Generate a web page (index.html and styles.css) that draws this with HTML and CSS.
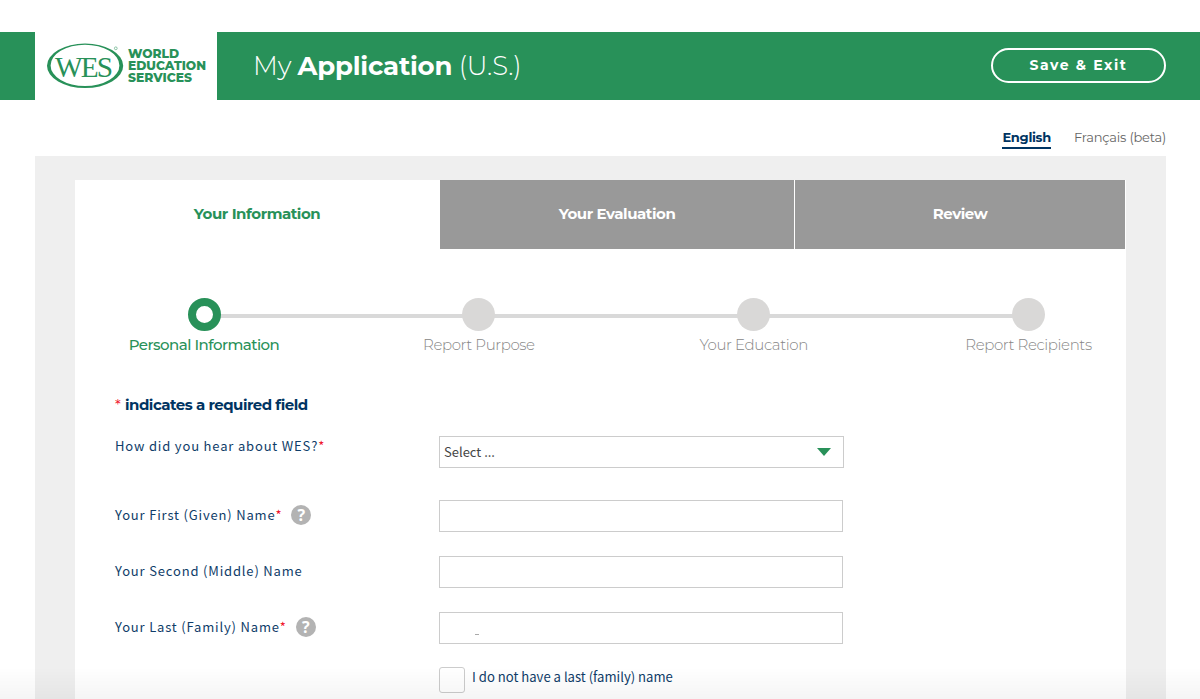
FILE: index.html
```html
<!DOCTYPE html>
<html lang="en">
<head>
  <meta charset="UTF-8">
  <title>My Application (U.S.)</title>
  <meta name="viewport" content="width=device-width, initial-scale=1.0">
  <link rel="stylesheet" href="styles.css">
</head>
<body>
  <header class="site-header">
    <a class="logo" href="#">
      <svg width="182" height="69" viewBox="35 31 182 69">
        <path class="logo-green" fill-rule="evenodd" d="M47 65.8a38.1 22.3 0 1 0 76.2 0a38.1 22.3 0 1 0 -76.2 0zM50.6 65.4a34.4 20.7 0 1 0 68.8 0a34.4 20.7 0 1 0 -68.8 0z"/>
        <text class="logo-mark" x="55" y="76.5" textLength="56" lengthAdjust="spacingAndGlyphs">WES</text>
        <circle class="logo-ring" cx="115.8" cy="48.3" r="1.4"/>
        <text class="logo-name" x="128" y="58" textLength="51" lengthAdjust="spacingAndGlyphs">WORLD</text>
        <text class="logo-name" x="128" y="70" textLength="78" lengthAdjust="spacingAndGlyphs">EDUCATION</text>
        <text class="logo-name" x="128" y="82" textLength="64" lengthAdjust="spacingAndGlyphs">SERVICES</text>
      </svg>
    </a>
    <h1 class="page-title">My <b>Application</b> (U.S.)</h1>
    <button class="save-btn" type="button">Save &amp; Exit</button>
  </header>

  <nav class="languages">
    <a class="active" href="#">English</a>
    <a href="#">Français (beta)</a>
  </nav>

  <main class="wrapper">
    <div class="card">
      <nav class="tabs">
        <a class="tab tab-active" href="#">Your Information</a>
        <a class="tab" href="#">Your Evaluation</a>
        <a class="tab" href="#">Review</a>
      </nav>

      <ol class="steps">
        <li class="step current"><i class="dot"></i>Personal Information</li>
        <li class="step"><i class="dot"></i>Report Purpose</li>
        <li class="step"><i class="dot"></i>Your Education</li>
        <li class="step"><i class="dot"></i>Report Recipients</li>
      </ol>

      <form class="form">
        <p class="required-note"><em>*</em> indicates a required field</p>

        <div class="row row-select">
          <label for="source">How did you hear about WES?<em>*</em></label>
          <div class="select" id="source">
            Select ...
            <svg width="14" height="8" viewBox="0 0 14 8"><path class="logo-green" d="M0 0h14L7 8z"/></svg>
          </div>
        </div>
        <div class="row">
          <label for="first">Your First (Given) Name<em>*</em><b class="help">?</b></label>
          <input type="text" id="first">
        </div>
        <div class="row">
          <label for="middle">Your Second (Middle) Name</label>
          <input type="text" id="middle">
        </div>
        <div class="row">
          <label for="last">Your Last (Family) Name<em>*</em><b class="help">?</b></label>
          <input class="marked" type="text" id="last">
        </div>
        <div class="check-row">
          <input type="checkbox" id="nolast">
          <label for="nolast">I do not have a last (family) name</label>
        </div>
      </form>
    </div>
  </main>
  <div class="fade"></div>
</body>
</html>
```
FILE: styles.css
```css
* {
  box-sizing: border-box;
}

body {
  margin: 0;
  height: 699px;
  overflow: hidden;
  background: #fff;
  color: #003462;
  font-family: Montserrat, Inter, sans-serif;
}

a {
  color: inherit;
  text-decoration: none;
}

em {
  color: #f0142d;
  font-style: normal;
}

/* header */
.site-header {
  display: flex;
  align-items: center;
  height: 68px;
  margin-top: 32px;
  padding: 0 34px 0 35px;
  background: #289159;
  color: #fff;
}

.logo {
  width: 182px;
  height: 68px;
  background: #fff;
  overflow: hidden;
}

.logo svg {
  display: block;
  margin-top: -1px;
}

.logo-green {
  fill: #289159;
}

.logo-mark {
  fill: #289159;
  font-family: "Liberation Serif", serif;
  font-size: 30px;
  letter-spacing: -2px;
}

.logo-ring {
  fill: none;
  stroke: #289159;
  stroke-width: .5;
}

.logo-name {
  fill: #289159;
  font-size: 11.6px;
  font-weight: 800;
}

.page-title {
  flex: 1;
  margin: 0 0 0 36px;
  font-size: 26px;
  font-weight: 300;
  letter-spacing: -.22px;
}

.page-title b {
  font-weight: 700;
}

.save-btn {
  width: 175px;
  height: 35px;
  margin-bottom: 2px;
  padding: 0;
  border: 2px solid #fff;
  border-radius: 18px;
  background: none;
  color: #fff;
  font: 700 14px Montserrat, Inter, sans-serif;
  letter-spacing: 1.6px;
}

.languages {
  display: flex;
  justify-content: flex-end;
  gap: 23px;
  height: 56px;
  padding: 28px 34px 0 0;
  font-size: 13px;
  line-height: 18px;
  letter-spacing: -.22px;
  color: #666;
}

.languages a {
  height: 21px;
}

.languages .active {
  border-bottom: 2px solid #003462;
  color: #003462;
  font-weight: 700;
  letter-spacing: -.3px;
}

/* card */
.wrapper {
  margin: 0 34px 0 35px;
  padding: 24px 40px 0;
  background: #efefef;
}

.card {
  height: 519px;
  background: #fff;
}

.tabs {
  display: grid;
  grid-template-columns: 364px 354px 330px;
  gap: 1px;
  height: 69px;
}

.tab {
  padding-top: 24px;
  background: #999;
  color: #fff;
  font-size: 15px;
  font-weight: 700;
  line-height: 20px;
  letter-spacing: -.44px;
  text-align: center;
}

.tab-active {
  background: #fff;
  color: #289159;
}

.steps {
  display: flex;
  justify-content: space-between;
  margin: 49px 17.5px 0 49px;
  padding: 0;
  list-style: none;
  background: linear-gradient(#d9d9d9, #d9d9d9) no-repeat 80px 16px / 824px 4px;
}

.step {
  display: flex;
  flex-direction: column;
  align-items: center;
  width: 160px;
  color: #868686;
  font-size: 15px;
  font-weight: 300;
  line-height: 20px;
  letter-spacing: -.4px;
  white-space: nowrap;
}

.dot {
  width: 33px;
  height: 33px;
  margin-bottom: 4px;
  border-radius: 50%;
  background: #d9d8d7;
}

.current {
  color: #289159;
  font-weight: 500;
  letter-spacing: -.52px;
}

.current .dot {
  border: 8px solid #289159;
  background: #fff;
}

/* form */
.form {
  padding: 40px 0 0 40px;
  font-family: "Source Sans Pro", "Noto Sans CJK SC", sans-serif;
}

.required-note {
  margin: 0 0 21px;
  font: 700 15px/20px Montserrat, Inter, sans-serif;
  letter-spacing: -.5px;
}

.required-note em {
  margin-right: 1px;
  font-weight: 400;
}

.row {
  display: flex;
  margin-bottom: 24px;
}

.row-select {
  margin-bottom: 32px;
}

.row label {
  display: flex;
  align-items: center;
  width: 324px;
  height: 29px;
  color: #0f3d69;
  font-size: 13px;
  letter-spacing: .83px;
}

.row-select label {
  height: 19px;
}

.row input,
.select {
  width: 404px;
  height: 32px;
  border: 1px solid #ccc;
  background: #fff;
}

/* short tick inside the last name box */
.row .marked {
  background: linear-gradient(#aaa, #aaa) no-repeat 35px 21px / 4px 1px;
}

.select {
  display: flex;
  align-items: center;
  justify-content: space-between;
  width: 405px;
  padding: 0 12px 1px 4px;
  color: #444;
  font-size: 13px;
}

.help {
  width: 20px;
  height: 20px;
  margin-left: 9px;
  border-radius: 50%;
  background: #b3b3b3;
  color: #fff;
  font: 700 16px/20px "Open Sans", sans-serif;
  letter-spacing: 0;
  text-align: center;
}

.check-row {
  display: flex;
  gap: 7px;
  margin-top: -1px;
  padding-left: 324px;
  color: #0f3d69;
  font-size: 13.1px;
  line-height: 20px;
}

.check-row input {
  appearance: none;
  width: 26px;
  height: 26px;
  margin: 0;
  border: 1px solid #ccc;
  border-radius: 3px;
  background: #fff;
}

.fade {
  position: fixed;
  left: 0;
  right: 0;
  bottom: 0;
  height: 32px;
  background: linear-gradient(rgba(0, 0, 0, 0), rgba(0, 0, 0, .04));
}
```
